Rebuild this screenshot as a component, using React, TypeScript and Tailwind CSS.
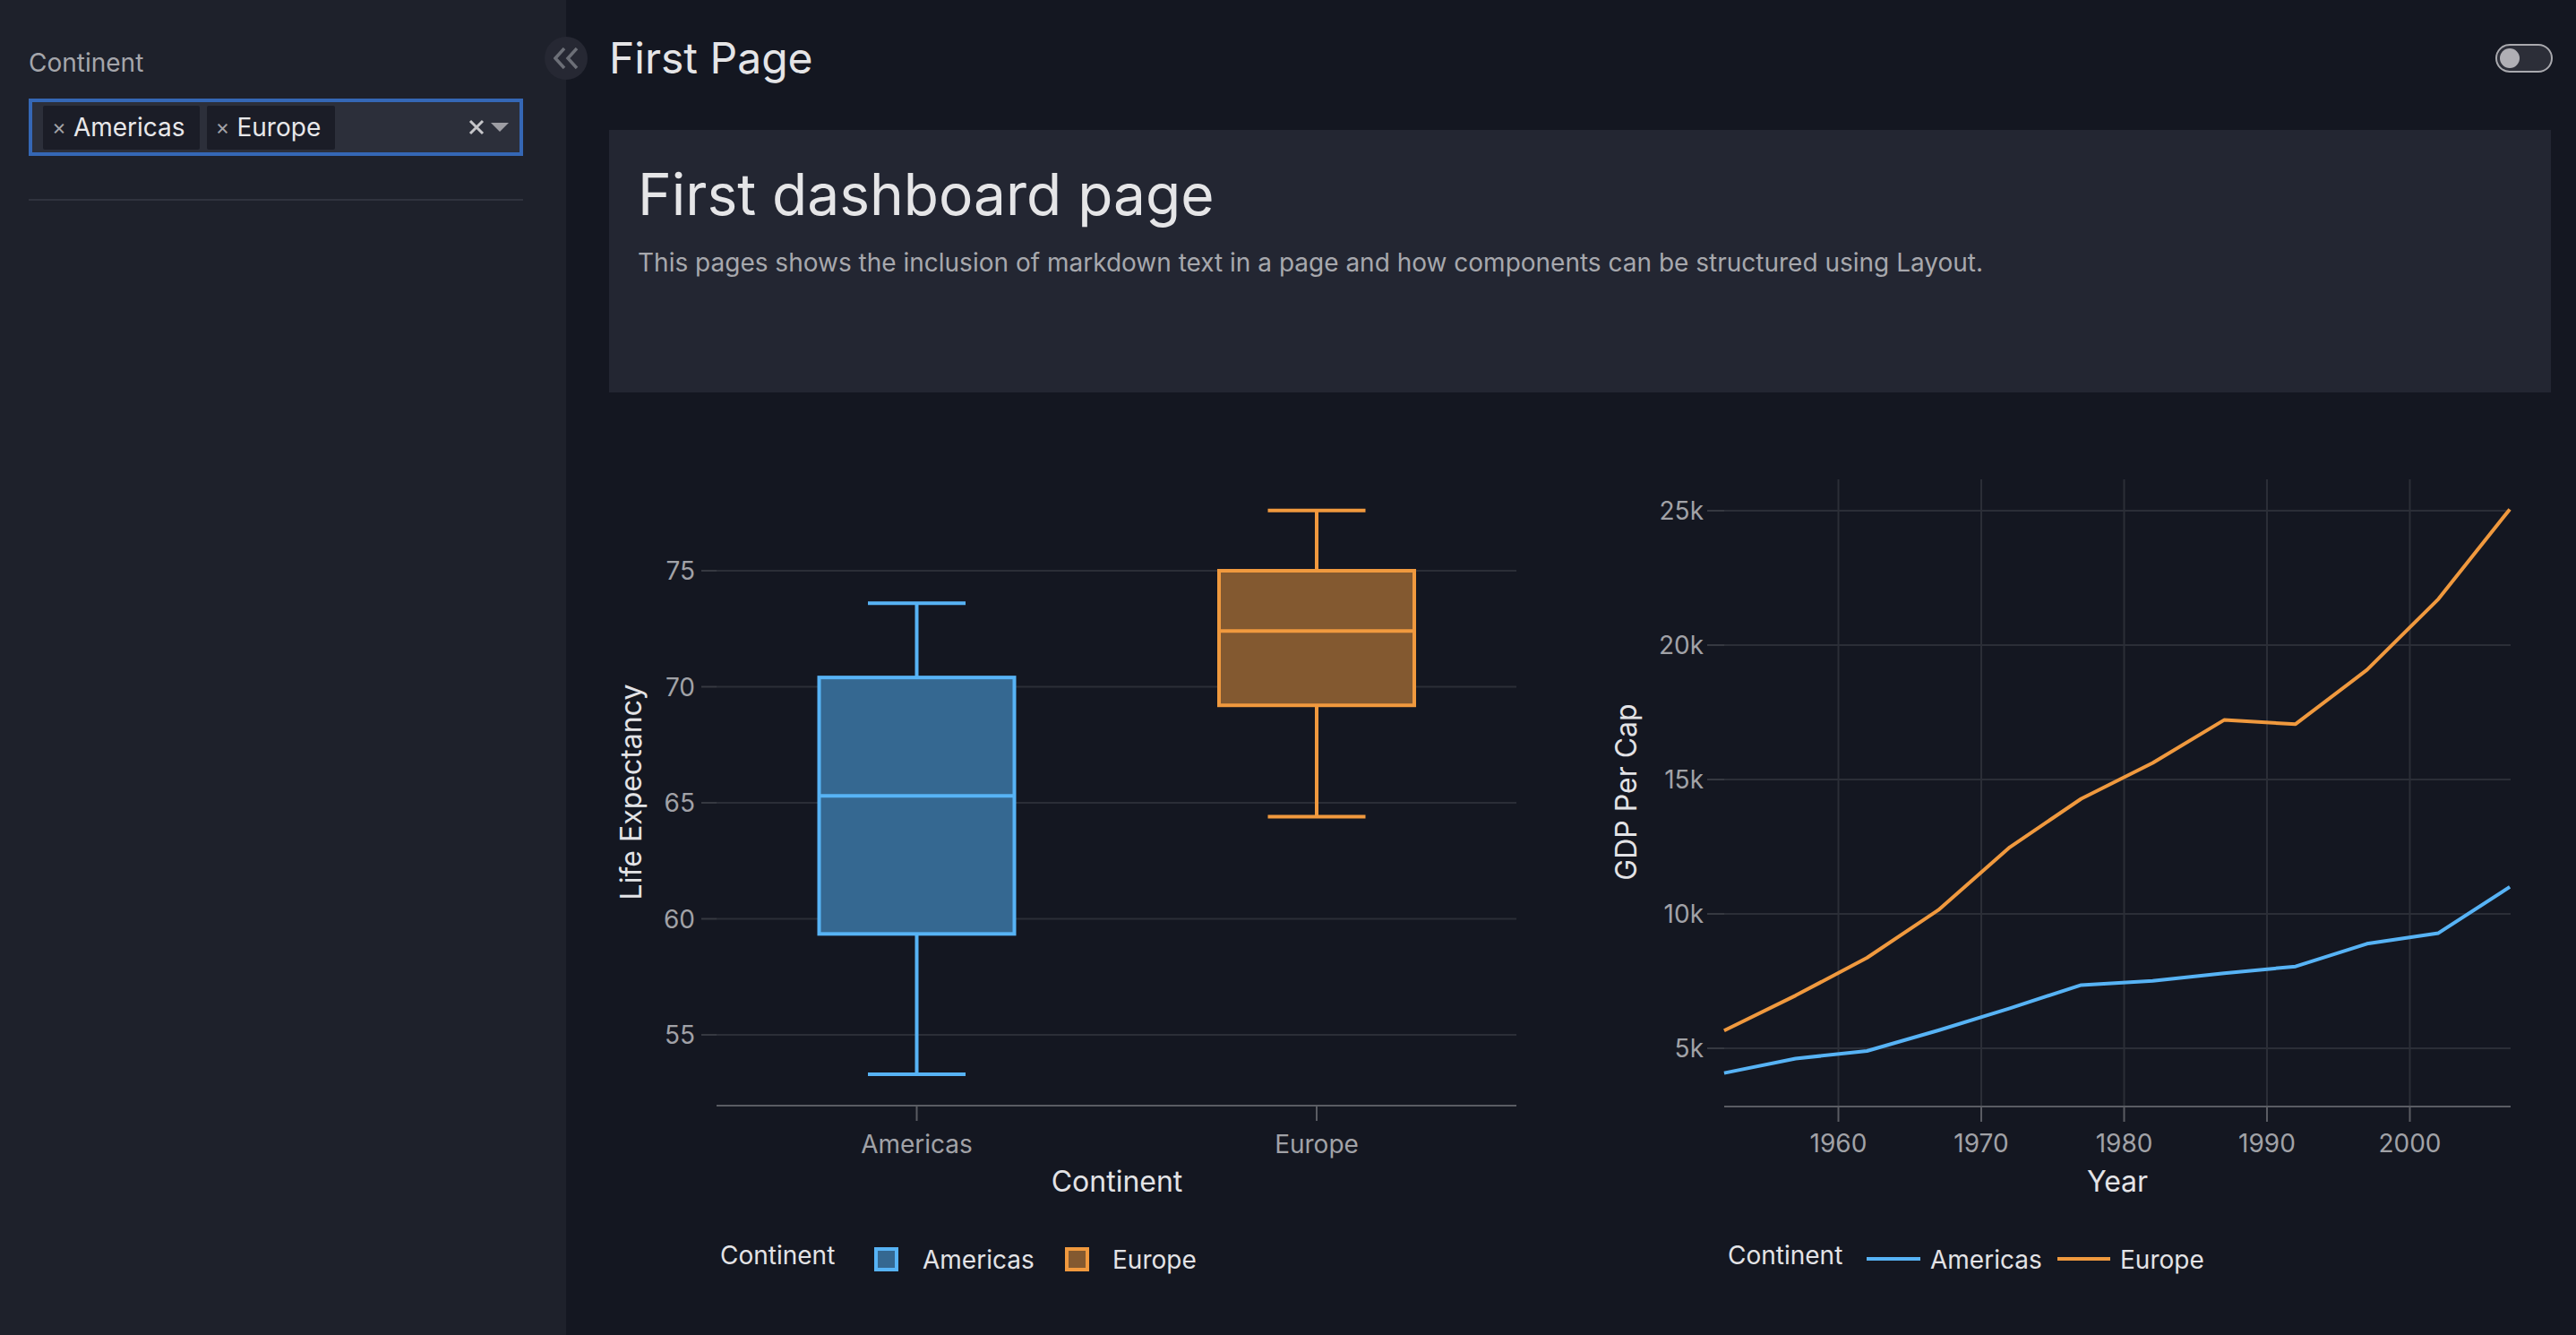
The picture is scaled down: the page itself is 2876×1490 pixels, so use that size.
import React from 'react';

const BLUE = '#57b3f5';
const BLUE_FILL = '#356891';
const ORANGE = '#f0993e';
const ORANGE_FILL = '#835930';
const GRID = '#2b2e37';
const AXIS = '#5a5c63';
const TICK_TEXT = '#a1a2a7';
const TITLE_TEXT = '#e3e3e6';
const FONT = 'Inter, "Noto Sans", sans-serif';

const years = [1952, 1957, 1962, 1967, 1972, 1977, 1982, 1987, 1992, 1997, 2002, 2007];
const gdp = {
  Americas: [4079.06, 4616.04, 4901.54, 5668.25, 6491.33, 7352.01, 7506.74, 7793.4, 8044.93, 8889.3, 9287.68, 11003.03],
  Europe: [5661.06, 6963.01, 8365.49, 10143.82, 12479.58, 14283.98, 15617.9, 17214.31, 17061.57, 19076.78, 21711.73, 25054.48],
};

const boxes = [
  { name: 'Americas', cx: 343.5, min: 53.3, q1: 59.35, med: 65.3, q3: 70.4, max: 73.6, stroke: BLUE, fill: BLUE_FILL },
  { name: 'Europe', cx: 790, min: 64.4, q1: 69.2, med: 72.4, q3: 75.0, max: 77.6, stroke: ORANGE, fill: ORANGE_FILL },
];

function BoxChart() {
  const y = (v: number) => 151 + (75 - v) * 25.9;
  const ticks = [55, 60, 65, 70, 75];
  return (
    <svg width={1060} height={960} style={{ fontFamily: FONT }}>
      {ticks.map(t => (
        <g key={t}>
          <line x1={120} x2={1013} y1={y(t)} y2={y(t)} stroke={GRID} strokeWidth={2} />
          <line x1={103} x2={120} y1={y(t)} y2={y(t)} stroke="#363941" strokeWidth={2} />
          <text x={96} y={y(t) + 10} textAnchor="end" fontSize={28} fill={TICK_TEXT}>
            {t}
          </text>
        </g>
      ))}
      <line x1={120} x2={1013} y1={748} y2={748} stroke={AXIS} strokeWidth={2} />
      {boxes.map(b => (
        <g key={b.name}>
          <line x1={b.cx} x2={b.cx} y1={y(b.max)} y2={y(b.q3)} stroke={b.stroke} strokeWidth={4} />
          <line x1={b.cx} x2={b.cx} y1={y(b.q1)} y2={y(b.min)} stroke={b.stroke} strokeWidth={4} />
          <line x1={b.cx - 54.5} x2={b.cx + 54.5} y1={y(b.max)} y2={y(b.max)} stroke={b.stroke} strokeWidth={4} />
          <line x1={b.cx - 54.5} x2={b.cx + 54.5} y1={y(b.min)} y2={y(b.min)} stroke={b.stroke} strokeWidth={4} />
          <rect
            x={b.cx - 109}
            y={y(b.q3)}
            width={218}
            height={y(b.q1) - y(b.q3)}
            fill={b.fill}
            stroke={b.stroke}
            strokeWidth={4}
          />
          <line x1={b.cx - 109} x2={b.cx + 109} y1={y(b.med)} y2={y(b.med)} stroke={b.stroke} strokeWidth={4} />
          <line x1={b.cx} x2={b.cx} y1={748} y2={765} stroke={AXIS} strokeWidth={2} />
          <text x={b.cx} y={801} textAnchor="middle" fontSize={28} fill={TICK_TEXT}>
            {b.name}
          </text>
        </g>
      ))}
      <text x={567} y={844} textAnchor="middle" fontSize={32} fill={TITLE_TEXT}>
        Continent
      </text>
      <text transform="translate(36,398) rotate(-90)" textAnchor="middle" fontSize={32} fill={TITLE_TEXT}>
        Life Expectancy
      </text>

      {/* legend */}
      <text x={124} y={925} fontSize={28} fill={TITLE_TEXT}>
        Continent
      </text>
      <rect x={298} y={908} width={23} height={23} fill={BLUE_FILL} stroke={BLUE} strokeWidth={4} />
      <text x={350} y={930} fontSize={28} fill={TITLE_TEXT}>
        Americas
      </text>
      <rect x={511} y={908} width={23} height={23} fill={ORANGE_FILL} stroke={ORANGE} strokeWidth={4} />
      <text x={562} y={930} fontSize={28} fill={TITLE_TEXT}>
        Europe
      </text>
    </svg>
  );
}

function LineChartSvg() {
  const x = (yr: number) => 264.5 + (yr - 1960) * 15.95;
  const y = (v: number) => 684 - (v - 5000) * 0.03;
  const yTicks = [5000, 10000, 15000, 20000, 25000];
  const xTicks = [1960, 1970, 1980, 1990, 2000];
  const path = (vals: number[]) =>
    vals.map((v, i) => `${i === 0 ? 'M' : 'L'}${x(years[i]).toFixed(1)},${y(v).toFixed(1)}`).join(' ');

  return (
    <svg width={1060} height={960} style={{ fontFamily: FONT }}>
      {xTicks.map(t => (
        <g key={t}>
          <line x1={x(t)} x2={x(t)} y1={49} y2={749} stroke={GRID} strokeWidth={2} />
          <line x1={x(t)} x2={x(t)} y1={749} y2={766} stroke={AXIS} strokeWidth={2} />
          <text x={x(t)} y={800} textAnchor="middle" fontSize={28} fill={TICK_TEXT}>
            {t}
          </text>
        </g>
      ))}
      {yTicks.map(t => (
        <g key={t}>
          <line x1={137} x2={1015} y1={y(t)} y2={y(t)} stroke={GRID} strokeWidth={2} />
          <line x1={118} x2={137} y1={y(t)} y2={y(t)} stroke="#363941" strokeWidth={2} />
          <text x={114} y={y(t) + 10} textAnchor="end" fontSize={28} fill={TICK_TEXT}>
            {t / 1000}k
          </text>
        </g>
      ))}
      <line x1={137} x2={1015} y1={749} y2={749} stroke={AXIS} strokeWidth={2} />
      <path d={path(gdp.Americas)} fill="none" stroke={BLUE} strokeWidth={4} strokeLinejoin="round" />
      <path d={path(gdp.Europe)} fill="none" stroke={ORANGE} strokeWidth={4} strokeLinejoin="round" />

      <text x={576} y={844} textAnchor="middle" fontSize={32} fill={TITLE_TEXT}>
        Year
      </text>
      <text transform="translate(39,398) rotate(-90)" textAnchor="middle" fontSize={32} fill={TITLE_TEXT}>
        GDP Per Cap
      </text>

      {/* legend */}
      <text x={141} y={925} fontSize={28} fill={TITLE_TEXT}>
        Continent
      </text>
      <line x1={296} x2={356} y1={919} y2={919} stroke={BLUE} strokeWidth={4} />
      <text x={367} y={930} fontSize={28} fill={TITLE_TEXT}>
        Americas
      </text>
      <line x1={509} x2={568} y1={919} y2={919} stroke={ORANGE} strokeWidth={4} />
      <text x={579} y={930} fontSize={28} fill={TITLE_TEXT}>
        Europe
      </text>
    </svg>
  );
}

function Chip({ label }: { label: string }) {
  return (
    <div className="flex h-[49px] items-center rounded-[2px] bg-[#1b1d27] pl-[10px] pr-[16px]">
      <span className="mr-[8px] text-[24px] leading-none text-[#a3a3a8]">×</span>
      <span className="text-[28px] leading-none text-[#e8e8ea]">{label}</span>
    </div>
  );
}

export default function App() {
  return (
    <div
      className="relative flex h-[1490px] w-full overflow-hidden bg-[#141721]"
      style={{ fontFamily: FONT }}
    >
      {/* sidebar */}
      <aside className="w-[632px] shrink-0 bg-[#1e212b] pl-[32px] pr-[48px] pt-[49px]">
        <label className="block text-[28px] leading-[42px] text-[#a5a6ab]">Continent</label>
        <div className="mt-[19px] flex h-[64px] items-center border-[4px] border-[#3567b5] bg-[#2c2f3a] pl-[12px] pr-[12px]">
          <div className="flex items-center gap-[8px]">
            <Chip label="Americas" />
            <Chip label="Europe" />
          </div>
          <div className="ml-auto flex items-center gap-[7px]">
            <svg width={18} height={18} viewBox="0 0 18 18">
              <path d="M2 2 L16 16 M16 2 L2 16" stroke="#c6c6ca" strokeWidth={3} />
            </svg>
            <svg width={20} height={10} viewBox="0 0 20 10">
              <path d="M0 0 H20 L10 10 Z" fill="#9d9da3" />
            </svg>
          </div>
        </div>
        <div className="mt-[48px] h-[2px] bg-[#30333e]" />
      </aside>

      {/* collapse button */}
      <div className="absolute left-[608px] top-[41px] flex h-[48px] w-[48px] items-center justify-center rounded-full bg-[#262833]">
        <svg width={28} height={24} viewBox="0 0 28 24">
          <polyline points="12,1 2,12 12,23" fill="none" stroke="#6c6f77" strokeWidth={3.5} />
          <polyline points="26,1 16,12 26,23" fill="none" stroke="#6c6f77" strokeWidth={3.5} />
        </svg>
      </div>

      {/* main */}
      <main className="flex min-w-0 flex-1 flex-col pl-[48px] pr-[28px]">
        <header className="flex h-[130px] items-center justify-between">
          <h2 className="text-[48px] leading-[58px] text-[#e5e5e7]">First Page</h2>
          <div className="-mr-[2px] flex h-[32px] w-[64px] items-center rounded-full border-2 border-[#a9a9ae] bg-[#2c2e38] pl-[3px]">
            <div className="h-[22px] w-[22px] rounded-full bg-[#b0afb5]" />
          </div>
        </header>

        <section className="mt-[15px] h-[293px] bg-[#232632] px-[32px] pt-[33px]">
          <h1 className="text-[64px] font-normal leading-[77px] text-[#e5e5e7]">First dashboard page</h1>
          <p className="mt-[17px] text-[28px] leading-[42px] text-[#a7a8ad]">
            This pages shows the inclusion of markdown text in a page and how components can be structured using Layout.
          </p>
        </section>

        <div className="mt-[48px] grid grid-cols-2 gap-[48px]">
          <div>
            <BoxChart />
          </div>
          <div>
            <LineChartSvg />
          </div>
        </div>
      </main>
    </div>
  );
}
